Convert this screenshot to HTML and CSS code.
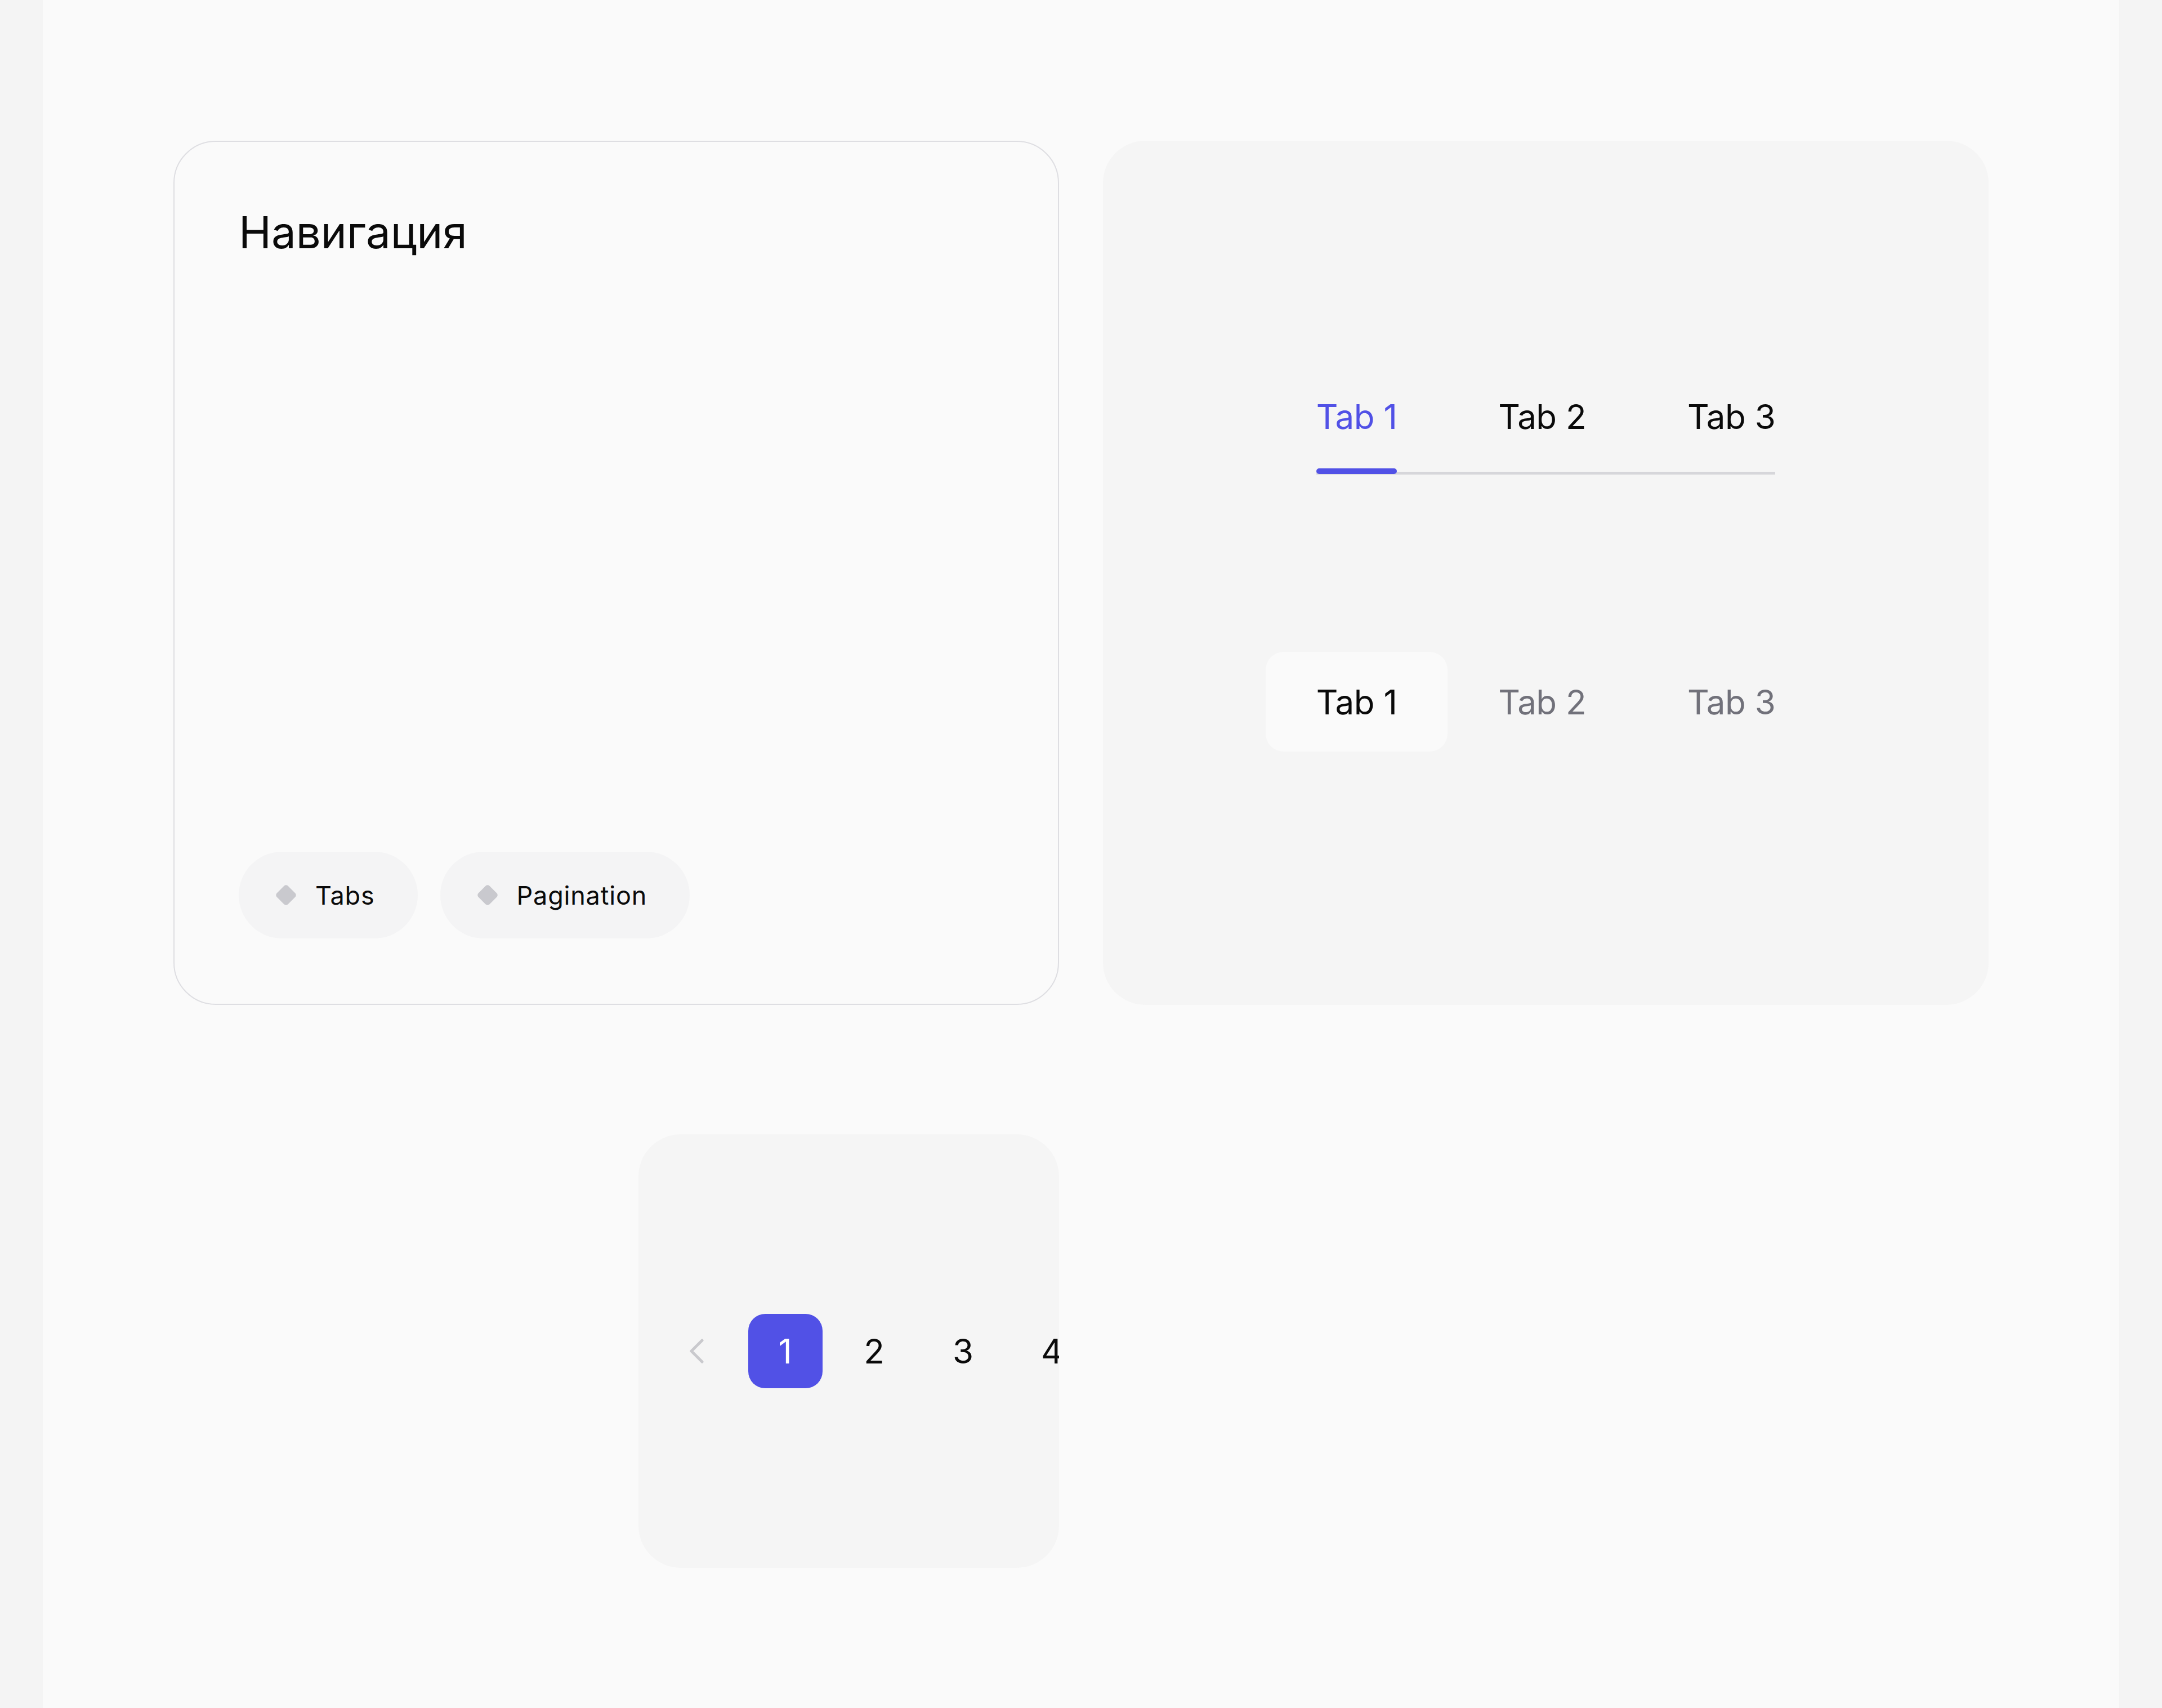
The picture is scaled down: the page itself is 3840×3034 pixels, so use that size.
FILE: index.html
```html
<!DOCTYPE html>
<html lang="ru">
<head>
  <meta charset="UTF-8">
  <meta name="viewport" content="width=device-width, initial-scale=1.0">
  <title>Навигация</title>
  <link rel="stylesheet" href="styles.css">
</head>
<body>
  <main class="page">
    <div class="grid">

      <section class="card card-intro">
        <h1>Навигация</h1>
        <div class="chips">
          <span class="chip"><i class="dot"></i>Tabs</span>
          <span class="chip"><i class="dot"></i>Pagination</span>
        </div>
      </section>

      <section class="card card-demo card-wide">
        <div class="tabs-line">
          <button class="tab active">Tab 1</button>
          <button class="tab">Tab 2</button>
          <button class="tab">Tab 3</button>
        </div>
        <div class="tabs-pill">
          <button class="seg active">Tab 1</button>
          <button class="seg">Tab 2</button>
          <button class="seg">Tab 3</button>
        </div>
      </section>

      <section class="card card-demo card-small">
        <nav class="pager">
          <button class="page-btn prev" aria-label="Назад">
            <svg width="26" height="44" viewBox="0 0 26 44">
              <path d="M23 3 L4 22 L23 41" fill="none" stroke="#c9c9cd" stroke-width="5" stroke-linecap="round" stroke-linejoin="round"/>
            </svg>
          </button>
          <button class="page-btn active">1</button>
          <button class="page-btn">2</button>
          <button class="page-btn">3</button>
          <button class="page-btn">4</button>
          <button class="page-btn next" aria-label="Вперёд">
            <svg width="26" height="44" viewBox="0 0 26 44">
              <path d="M3 3 L22 22 L3 41" fill="none" stroke="#0a0a0a" stroke-width="5" stroke-linecap="round" stroke-linejoin="round"/>
            </svg>
          </button>
        </nav>
      </section>

    </div>
  </main>
</body>
</html>
```

FILE: styles.css
```css
body {
  margin: 0;
  background: #f4f4f4;
  font-family: Inter, "Noto Sans", sans-serif;
  color: #0a0a0a;
}

button {
  font-family: inherit;
  background: none;
  border: 0;
  padding: 0;
  color: inherit;
  cursor: pointer;
  white-space: nowrap;
}

.page {
  margin: 0 76px;
  min-height: 100vh;
  background: #fafafa;
  padding: 250px 232px;
  box-sizing: border-box;
}

.grid {
  display: grid;
  grid-template-columns: repeat(4, minmax(0, 1fr));
  column-gap: 78px;
  row-gap: 230px;
}

.card {
  border-radius: 75px;
  box-sizing: border-box;
}

/* intro card */
.card-intro {
  grid-column: 1 / span 2;
  height: 1535px;
  border: 2px solid #dedee2;
  padding: 114px 114px 116px;
  display: flex;
  flex-direction: column;
  justify-content: space-between;
}

.card-intro h1 {
  margin: 0;
  font-size: 78px;
  font-weight: 400;
  line-height: 1.2;
}

.chips {
  display: flex;
  gap: 40px;
}

.chip {
  display: inline-flex;
  align-items: center;
  gap: 32px;
  height: 154px;
  padding: 0 76px 0 64px;
  border-radius: 999px;
  background: #f4f4f5;
  font-size: 45px;
  letter-spacing: 0.8px;
}

.dot {
  width: 28px;
  height: 28px;
  margin: 0 6px;
  border-radius: 5px;
  background: #c9c9ce;
  transform: rotate(45deg);
}

/* demo cards */
.card-demo {
  background: #f5f5f5;
  height: 1535px;
  display: flex;
  flex-direction: column;
  align-items: center;
  justify-content: center;
  gap: 315px;
}

.card-wide {
  grid-column: 3 / span 2;
}

.tabs-line {
  display: flex;
  gap: 180px;
  border-bottom: 5px solid #d6d6da;
}

.tab {
  position: relative;
  font-size: 60px;
  line-height: 80px;
  letter-spacing: -0.5px;
  padding-bottom: 58px;
  color: #0a0a0a;
}

.tab.active {
  color: #5151e6;
}

.tab.active::after {
  content: "";
  position: absolute;
  left: 0;
  right: 0;
  bottom: -4px;
  height: 10px;
  border-radius: 5px;
  background: #5151e6;
}

.tabs-pill {
  display: flex;
}

.seg {
  height: 177px;
  padding: 0 90px;
  font-size: 60px;
  letter-spacing: -0.5px;
  color: #71717a;
  border-radius: 32px;
}

.seg.active {
  background: #fafafa;
  color: #0a0a0a;
}

/* pagination */
.card-small {
  grid-column: 2;
  height: 770px;
  overflow: hidden;
  padding: 0 37px;
  align-items: flex-start;
}

.pager {
  display: flex;
  align-items: center;
  gap: 26px;
  flex-shrink: 0;
}

.page-btn {
  flex: 0 0 132px;
  height: 132px;
  border-radius: 30px;
  font-size: 60px;
  display: flex;
  align-items: center;
  justify-content: center;
}

.page-btn.active {
  background: #5151e6;
  color: #fff;
}
```
